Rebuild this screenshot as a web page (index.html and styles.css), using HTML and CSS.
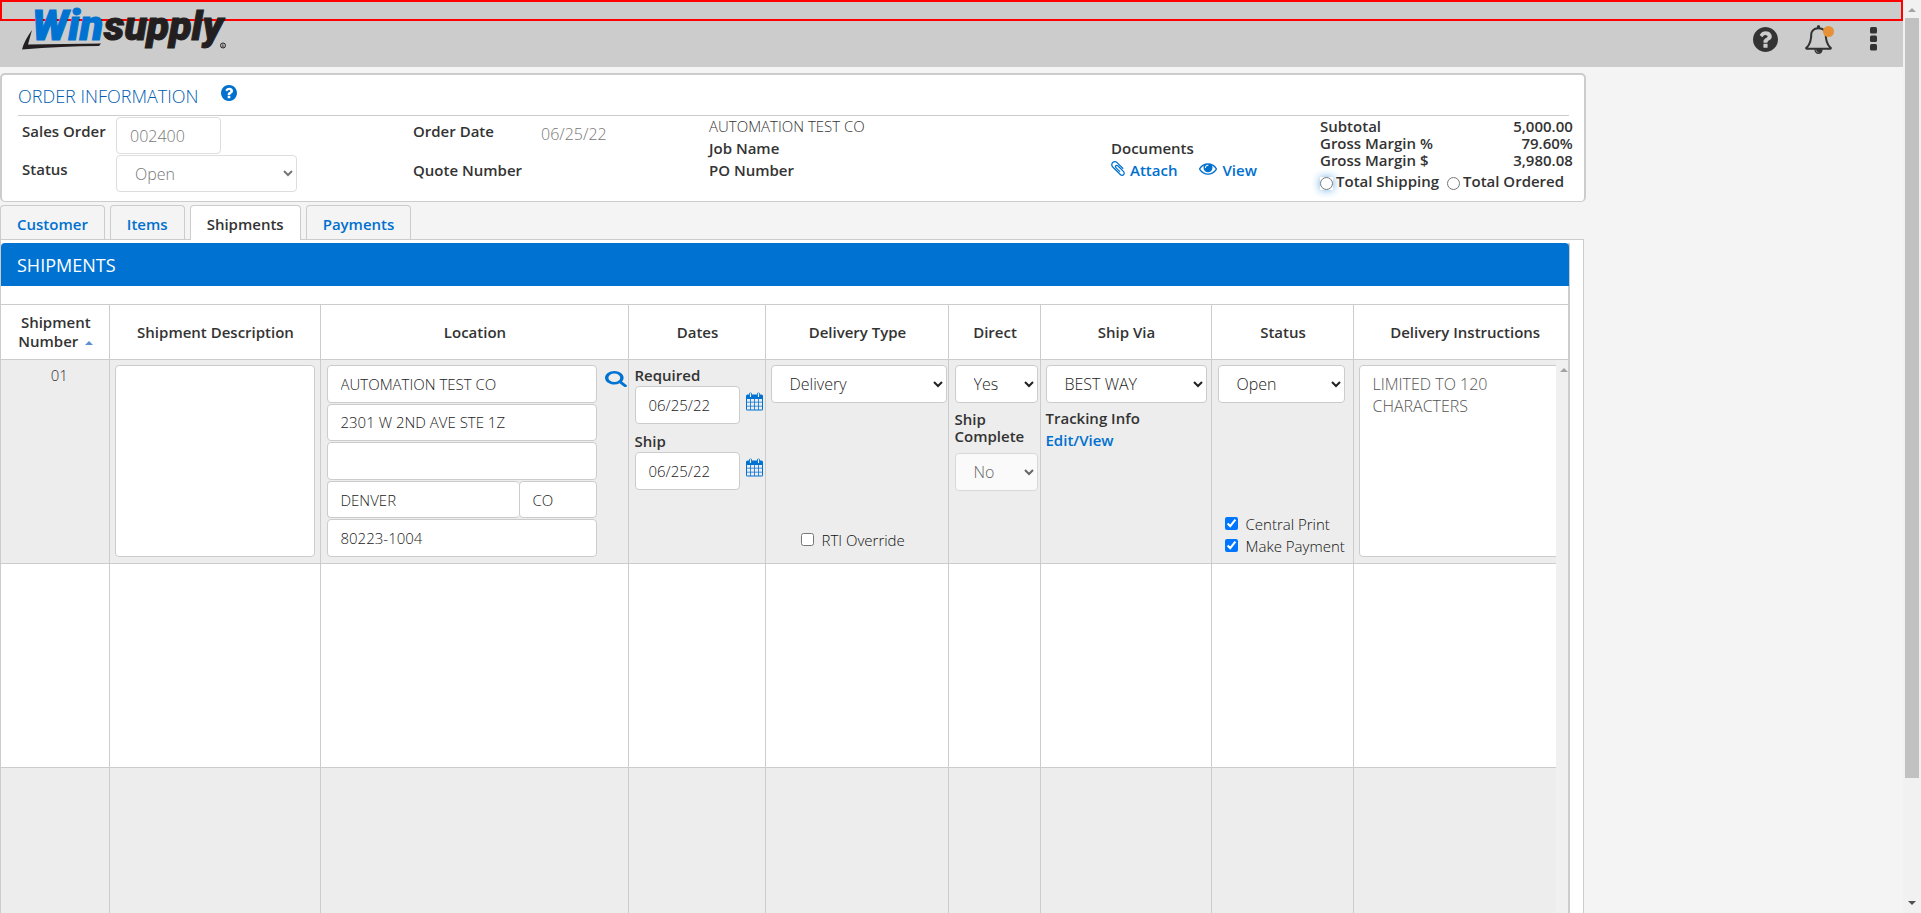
FILE: index.html
```html
<!DOCTYPE html>
<html lang="en">
<head>
<meta charset="utf-8">
<title>Winsupply - Shipments</title>
<link rel="stylesheet" href="styles.css">
</head>
<body>
<svg class="defs" aria-hidden="true">
  <symbol id="i-help" viewBox="0 128 1536 1536"><path d="M896 1376v-192q0-14-9-23t-23-9h-192q-14 0-23 9t-9 23v192q0 14 9 23t23 9h192q14 0 23-9t9-23zM1152 704q0-88-55.500-163t-138.500-116-170-41q-243 0-371 213-15 24 8 42l132 100q7 6 19 6 16 0 25-12 53-68 86-92 34-24 86-24 48 0 85.500 26t37.500 59q0 38-20 61t-68 45q-63 28-115.500 86.500t-52.500 125.500v36q0 14 9 23t23 9h192q14 0 23-9t9-23q0-19 21.500-49.500t54.500-49.500q32-18 49-28.500t46-35 44.500-48 28-60.500 12.500-81zM1536 896q0 209-103 385.500t-279.500 279.500-385.500 103-385.500-103-279.500-279.500-103-385.500 103-385.500 279.500-279.500 385.500-103 385.500 103 279.500 279.500 103 385.500z"/></symbol>
  <symbol id="i-bell" viewBox="0 0 1792 1792"><path d="M912 1696q0-16-16-16-59 0-101.500-42.500t-42.500-101.500q0-16-16-16t-16 16q0 73 51.500 124.500t124.500 51.500q16 0 16-16zM246 1408h1300q-266-300-266-832 0-51-24-105t-69-103-121.500-80.500-169.500-31.500-169.500 31.500-121.500 80.500-69 103-24 105q0 532-266 832zM1728 1408q0 52-38 90t-90 38h-448q0 106-75 181t-181 75-181-75-75-181h-448q-52 0-90-38t-38-90q50-42 91-88t85-119.500 74.500-158.500 50-206 19.500-260q0-152 117-282.500t307-158.500q-8-19-8-39 0-40 28-68t68-28 68 28 28 68q0 20-8 39 190 28 307 158.500t117 282.500q0 139 19.500 260t50 206 74.500 158.500 85 119.500 91 88z"/></symbol>
  <symbol id="i-clip" viewBox="0 128 1408 1536"><path d="M1404 1385q0 117-79 196t-196 79q-135 0-235-100l-777-776q-113-115-113-271 0-159 110-270t269-111q158 0 273 113l605 606q10 10 10 22 0 16-30.500 46.500t-46.500 30.500q-13 0-23-10l-606-607q-79-77-181-77-106 0-179 75t-73 181q0 105 76 181l776 777q63 63 145 63 64 0 106-42t42-106q0-82-63-145l-581-581q-26-24-60-24-29 0-48 19t-19 48q0 32 25 59l410 410q10 10 10 22 0 16-31 47t-47 31q-12 0-22-10l-410-410q-63-61-63-149 0-82 57-139t139-57q88 0 149 63l581 581q100 98 100 235z"/></symbol>
  <symbol id="i-eye" viewBox="0 384 1792 1152"><path d="M1664 960q-152-236-381-353 61 104 61 225 0 185-131.500 316.500t-316.500 131.500-316.500-131.500-131.500-316.500q0-121 61-225-229 117-381 353 133 205 333.500 326.500t434.500 121.500 434.500-121.500 333.500-326.500zM944 576q0-20-14-34t-34-14q-125 0-214.500 89.500t-89.500 214.500q0 20 14 34t34 14 34-14 14-34q0-86 61-147t147-61q20 0 34-14t14-34zM1792 960q0 34-20 69-140 230-376.500 368.500t-499.500 138.500-499.500-139-376.500-368q-20-35-20-69t20-69q140-229 376.500-368t499.500-139 499.500 139 376.500 368q20 35 20 69z"/></symbol>
  <symbol id="i-search" viewBox="64 128 1664 1664" preserveAspectRatio="none"><path d="M1216 832q0-185-131.500-316.500t-316.500-131.500-316.500 131.500-131.500 316.500 131.500 316.500 316.500 131.500 316.500-131.500 131.500-316.500zM1728 1664q0 52-38 90t-90 38q-54 0-90-38l-343-342q-179 124-399 124-143 0-273.500-55.500t-225-150-150-225-55.500-273.500 55.500-273.500 150-225 225-150 273.500-55.500 273.500 55.500 225 150 150 225 55.500 273.500q0 220-124 399l343 343q37 37 37 90z"/></symbol>
  <symbol id="i-cal" viewBox="0 0 17 19"><path fill-rule="evenodd" d="M1.500 2.500h14q1.500 0 1.500 1.500v13q0 1.500-1.500 1.500h-14q-1.500 0-1.500-1.500v-13q0-1.500 1.500-1.500zM1 7v2.800h3.100v-2.800zM4.900 7v2.800h3.200v-2.800zM8.900 7v2.800h3.200v-2.800zM12.900 7v2.800h3.100v-2.800zM1 10.600v3.200h3.100v-3.200zM4.900 10.600v3.200h3.200v-3.200zM8.900 10.600v3.200h3.200v-3.200zM12.900 10.600v3.200h3.100v-3.200zM1 14.600v2.900h3.100v-2.900zM4.900 14.600v2.900h3.200v-2.900zM8.900 14.600v2.900h3.200v-2.900zM12.900 14.600v2.900h3.100v-2.900z"/><rect x="3" y=".5" width="3" height="5" rx="1.500"/><rect x="11" y=".5" width="3" height="5" rx="1.500"/><path d="M4.500 1.600v2.800M12.500 1.600v2.800" stroke="#eee" stroke-width="1.200" stroke-linecap="round"/></symbol>
</svg>

<div class="viewport">
  <div class="page">
    <header class="topbar">
      <div class="notice"></div>
      <div class="topbar-row">
        <a class="logo" href="#" aria-label="Winsupply home">
          <svg width="210" height="46" viewBox="0 0 210 46">
            <path d="M10 24L6 38.500L79 37.500L77 40Q40 40 0 43.500Q2 35 10 24z" fill="#231f20"/>
            <text class="logo-win" x="10" y="34">Win</text>
            <text class="logo-supply" x="82" y="34">supply</text>
            <circle cx="201" cy="39.500" r="2.500" fill="none" stroke="#231f20"/>
            <path d="M200.300 41.300v-2.500h1q1 .8 0 1.300l1 1.200" fill="none" stroke="#231f20" stroke-width=".6"/>
          </svg>
        </a>
        <nav class="tools">
          <button class="tool" aria-label="Help"><svg width="25" height="25"><use href="#i-help"/></svg></button>
          <button class="tool bell" aria-label="Notifications"><svg width="29" height="29"><use href="#i-bell"/></svg><span class="dot"></span></button>
          <button class="tool" aria-label="More"><svg width="7" height="24" viewBox="0 0 7 24"><rect width="7" height="6.500" rx="1.500"/><rect y="8.500" width="7" height="6.500" rx="1.500"/><rect y="17" width="7" height="6.500" rx="1.500"/></svg></button>
        </nav>
      </div>
    </header>

    <main class="content">
      <section class="order">
        <div class="order-title">
          <h1>ORDER INFORMATION</h1>
          <button class="help" aria-label="Order help"><svg width="16" height="16"><use href="#i-help"/></svg></button>
        </div>
        <div class="order-body">
          <div class="pairs pairs-wide">
            <label for="so">Sales Order</label><input id="so" class="field dim so" value="002400" readonly>
            <label for="st">Status</label><select id="st" class="field dim st" disabled><option>Open</option></select>
          </div>
          <div class="pairs">
            <b>Order Date</b><span class="date">06/25/22</span>
            <b>Quote Number</b><span></span>
          </div>
          <div class="lines">
            <span>AUTOMATION TEST CO</span><b>Job Name</b><b>PO Number</b>
          </div>
          <div class="lines docs">
            <b>Documents</b>
            <div class="doc-links">
              <a href="#"><svg width="14" height="15"><use href="#i-clip"/></svg>Attach</a>
              <a href="#"><svg width="18" height="12"><use href="#i-eye"/></svg>View</a>
            </div>
          </div>
          <div class="totals">
            <dl><dt>Subtotal</dt><dd>5,000.00</dd><dt>Gross Margin %</dt><dd>79.60%</dd><dt>Gross Margin $</dt><dd>3,980.08</dd></dl>
            <div class="radios">
              <label><input type="radio" name="tot" class="glow">Total Shipping</label>
              <label><input type="radio" name="tot">Total Ordered</label>
            </div>
          </div>
        </div>
      </section>

      <nav class="tabs">
        <a href="#">Customer</a><a href="#">Items</a><a href="#" class="active">Shipments</a><a href="#">Payments</a>
      </nav>

      <section class="panel">
        <div class="sheet">
          <h2>SHIPMENTS</h2>
          <div class="grid-wrap">
            <table>
              <colgroup><col class="c1"><col class="c2"><col class="c3"><col class="c4"><col class="c5"><col class="c6"><col class="c7"><col class="c8"><col></colgroup>
              <thead>
                <tr><th>Shipment Number <span class="sort"></span></th><th>Shipment Description</th><th>Location</th><th>Dates</th><th>Delivery Type</th><th>Direct</th><th>Ship Via</th><th>Status</th><th>Delivery Instructions</th></tr>
              </thead>
              <tbody>
                <tr>
                  <td class="num">01</td>
                  <td><textarea class="field area" aria-label="Shipment description"></textarea></td>
                  <td>
                    <div class="loc">
                      <div class="loc-fields">
                        <input class="field" aria-label="Name" value="AUTOMATION TEST CO">
                        <input class="field" aria-label="Address 1" value="2301 W 2ND AVE STE 1Z">
                        <input class="field" aria-label="Address 2">
                        <div class="city"><input class="field" aria-label="City" value="DENVER"><input class="field" aria-label="State" value="CO"></div>
                        <input class="field" aria-label="Zip" value="80223-1004">
                      </div>
                      <button class="icon find" aria-label="Search location"><svg width="22" height="16"><use href="#i-search"/></svg></button>
                    </div>
                  </td>
                  <td>
                    <div class="dates">
                      <label for="req">Required</label>
                      <div class="date-row"><input id="req" class="field" value="06/25/22"><button class="icon" aria-label="Pick required date"><svg width="17" height="19"><use href="#i-cal"/></svg></button></div>
                      <label for="shp">Ship</label>
                      <div class="date-row"><input id="shp" class="field" value="06/25/22"><button class="icon" aria-label="Pick ship date"><svg width="17" height="19"><use href="#i-cal"/></svg></button></div>
                    </div>
                  </td>
                  <td>
                    <div class="cell type">
                      <select class="field" aria-label="Delivery type"><option>Delivery</option></select>
                      <label class="check rti"><input type="checkbox">RTI Override</label>
                    </div>
                  </td>
                  <td>
                    <div class="cell direct">
                      <select class="field" aria-label="Direct"><option>Yes</option></select>
                      <label class="tight" for="sc">Ship Complete</label>
                      <select id="sc" class="field off" disabled><option>No</option></select>
                    </div>
                  </td>
                  <td>
                    <div class="cell via">
                      <select class="field" aria-label="Ship via"><option>BEST WAY</option></select>
                      <b>Tracking Info</b><a href="#">Edit/View</a>
                    </div>
                  </td>
                  <td>
                    <div class="cell status">
                      <select class="field" aria-label="Shipment status"><option>Open</option></select>
                      <div class="checks">
                        <label class="check"><input type="checkbox" checked>Central Print</label>
                        <label class="check"><input type="checkbox" checked>Make Payment</label>
                      </div>
                    </div>
                  </td>
                  <td><textarea class="field area" aria-label="Delivery instructions" placeholder="LIMITED TO 120 CHARACTERS"></textarea></td>
                </tr>
                <tr><td></td><td></td><td></td><td></td><td></td><td></td><td></td><td></td><td></td></tr>
                <tr><td></td><td></td><td></td><td></td><td></td><td></td><td></td><td></td><td></td></tr>
              </tbody>
            </table>
            <div class="inner-bar"><span class="up"></span></div>
          </div>
        </div>
      </section>
    </main>
  </div>
  <div class="scrollbar"><span class="up"></span><span class="thumb"></span><span class="down"></span></div>
</div>
</body>
</html>
```
FILE: styles.css
```css
* { box-sizing: border-box; }
body {
  margin: 0;
  background: #f4f4f4;
  color: #333;
  font: 300 15px/22px "Open Sans", "Noto Sans", sans-serif;
}
button { border: 0; padding: 0; background: none; }
svg { display: block; fill: currentColor; overflow: visible; }
a { color: #0070cf; text-decoration: none; font-weight: 600; }
b, label, th { font-weight: 600; }
.defs { position: absolute; width: 0; height: 0; }

.viewport { display: grid; grid-template-columns: minmax(0, 1fr) 18px; height: 100vh; overflow: hidden; }
.page { display: flex; flex-direction: column; min-height: 0; }

/* Top bar */
.topbar { flex: none; background: #ccc; position: relative; height: 67px; }
.notice { position: absolute; inset: 0 0 auto; height: 21px; border: 2px solid #f00; }
.topbar-row { position: relative; display: flex; justify-content: space-between; padding: 6px 26px 0 22px; }
.logo-win, .logo-supply { font: italic 900 41px Roboto, "Liberation Sans", sans-serif; stroke-width: 1px; }
.logo-win { font-size: 43px; fill: #0073d2; stroke: #0073d2; }
.logo-supply { fill: #231f20; stroke: #231f20; }
.tools { display: flex; align-items: center; gap: 26px; padding-top: 14px; height: 52px; }
.tool { color: #333; }
.bell { position: relative; margin-right: 11px; }
.dot { position: absolute; top: 1px; right: -1px; width: 11px; height: 11px; border-radius: 50%; background: #e69138; }

.content { width: 83.3333%; display: flex; flex-direction: column; flex: 1; min-height: 0; padding-top: 6px; }

/* Order information */
.order {
  flex: none;
  background: #fff;
  border: 2px solid #ccc;
  border-bottom-width: 1px;
  border-radius: 5px;
  padding: 8px 11px 8px 16px;
}
.order-title { display: flex; gap: 22px; height: 33px; margin-right: 4px; border-bottom: 1px solid #ccc; }
h1 { margin: 0; font-size: 18px; line-height: 26px; font-weight: 300; color: #005cb0; }
.help { color: #0070cf; align-self: flex-start; padding-top: 2px; }
.order-body { display: grid; grid-template-columns: 395px 296px 402px 209px minmax(0, 1fr); height: 77px; }
.pairs { display: grid; grid-template-columns: 128px 1fr; grid-auto-rows: 39px; align-items: start; }
.pairs-wide { grid-template-columns: 94px 1fr; padding: 1px 0 0 4px; grid-auto-rows: 38px; }
.pairs b { padding-top: 4px; }
.pairs label { padding-top: 3px; }
.date { padding-top: 7px; color: #777; font-size: 16px; }
.lines { display: flex; flex-direction: column; margin-top: -1px; }
.docs { padding-top: 22px; }
.doc-links { display: flex; gap: 22px; }
.doc-links a { display: flex; gap: 5px; }
.doc-links a svg { margin-top: 2px; }
.doc-links a:last-child svg { margin-top: 4px; }
.totals { font-weight: 600; padding-top: 2px; }
dl { margin: 0; display: grid; grid-template-columns: auto auto; line-height: 17px; justify-content: space-between; }
dd { margin: 0; text-align: right; }
.radios { display: flex; gap: 8px; padding-top: 1px; }
.radios label { display: flex; gap: 3px; }
.radios input { width: 13px; height: 13px; margin: 7px 0 0; }
.glow { box-shadow: 0 0 8px #66afe9; }

/* Form fields */
.field {
  font: 300 15px/22px "Open Sans", "Noto Sans", sans-serif;
  color: #222;
  background: #fff;
  border: 1px solid #ccc;
  border-radius: 4px;
  height: 38px;
  width: 100%;
  padding: 0 13px;
  margin: 0;
  display: block;
  min-width: 0;
}
select.field { font-size: 16px; padding: 0 0 0 14px; }
.field.dim { color: #777; border-color: #ddd; height: 37px; font-size: 16px; opacity: 1; }
.so { width: 105px; }
.st { width: 181px; }
.field.off { background: #fafafa; color: #666; border-color: #d8d8d8; opacity: 1; }

/* Tabs */
.tabs { flex: none; display: flex; gap: 5px; margin-top: 3px; border-bottom: 1px solid #ccc; margin-right: 2px; }
.tabs a {
  border: 1px solid #ccc;
  border-bottom: 0;
  border-radius: 4px 4px 0 0;
  padding: 7px 16px 4px;
}
.tabs .active { background: #fff; color: #333; margin-bottom: -1px; }

/* Shipments */
.panel { flex: 1; min-height: 0; background: #fff; border: 1px solid #ccc; border-width: 0 1px; margin-right: 2px; padding: 3px 13px 0 0; overflow: hidden; }
.sheet { height: 100%; border-right: 2px solid #ccc; display: flex; flex-direction: column; }
h2 { flex: none; margin: 0 -1px 18px 0; padding: 2px 16px 0; background: #0073d2; color: #fff; font-size: 18px; line-height: 41px; font-weight: 400; border-radius: 4px 4px 0 0; }
.grid-wrap { position: relative; overflow: hidden; flex: 1; min-height: 0; }
table { width: calc(100% + 8px); border-collapse: collapse; table-layout: fixed; }
.c1 { width: 108px; }
.c2 { width: 211px; }
.c3 { width: 308px; }
.c4 { width: 137px; }
.c5 { width: 183px; }
.c6 { width: 92px; }
.c7 { width: 171px; }
.c8 { width: 142px; }
th { height: 55px; padding: 0 12px 0 14px; line-height: 19px; border: 1px solid #ccc; border-left-width: 0; }
td { height: 204px; padding: 5px; vertical-align: top; border: 1px solid #ccc; border-left-width: 0; }
tbody tr:nth-child(odd) { background: #ededed; }
.num { text-align: center; padding: 4px 5px 0 14px; }
.sort { display: inline-block; margin: 0 0 2px 3px; border: 4px solid transparent; border-top: 0; border-bottom-color: #5b8fd0; }
.area { height: 192px; width: 200px; padding: 7px 13px; font-size: 16px; resize: none; overflow: hidden; }
.area::placeholder { color: #555; }
.loc { display: flex; gap: 8px; }
.loc-fields { flex: 1; display: grid; grid-template-rows: repeat(5, 1fr); gap: 1px; height: 192px; margin-left: 1px; }
.loc-fields .field { height: 100%; }
.city { display: grid; grid-template-columns: 1fr 78px; }
.city .field:first-child { border-right: 0; }
.icon { color: #0073d2; flex: none; align-self: flex-start; margin-top: 6px; }
.find { margin-right: -4px; }
.dates { display: flex; flex-direction: column; margin: -1px -4px 0 1px; }
.dates > label:nth-of-type(2) { margin-top: 6px; }
.date-row { display: flex; gap: 6px; }
.date-row .field { width: 105px; }
.cell { display: flex; flex-direction: column; height: 192px; }
.type { margin-right: -4px; }
.direct { margin: 0 -3px 0 1px; }
.via { margin-right: -1px; }
.via b { margin-top: 4px; }
.status { padding: 0 3px 0 1px; }
.tight { line-height: 17px; margin: 8px 0; }
.check { display: flex; gap: 8px; font-weight: 300; color: #111; }
.check input { width: 13px; height: 13px; margin: 4px 0 0; accent-color: #0075ff; }
.rti { margin: auto auto 6px 30px; }
.checks { margin-top: auto; padding-left: 7px; white-space: nowrap; }

/* Scroll bars */
.inner-bar { position: absolute; top: 56px; right: 0; bottom: 0; width: 12px; background: #f0f0f0; display: flex; justify-content: flex-end; overflow: hidden; }
.scrollbar { background: #f1f1f1; display: flex; flex-direction: column; align-items: center; }
.up { margin-top: 8px; width: 8px; height: 4px; border: 4px solid transparent; border-top: 0; border-bottom-color: #a3a3a3; }
.thumb { width: 14px; flex: 0 0 83.2%; background: #c1c1c1; margin-top: 6px; }
.down { margin: auto 0 8px; border: 4px solid transparent; border-bottom: 0; border-top-color: #505050; }
```
